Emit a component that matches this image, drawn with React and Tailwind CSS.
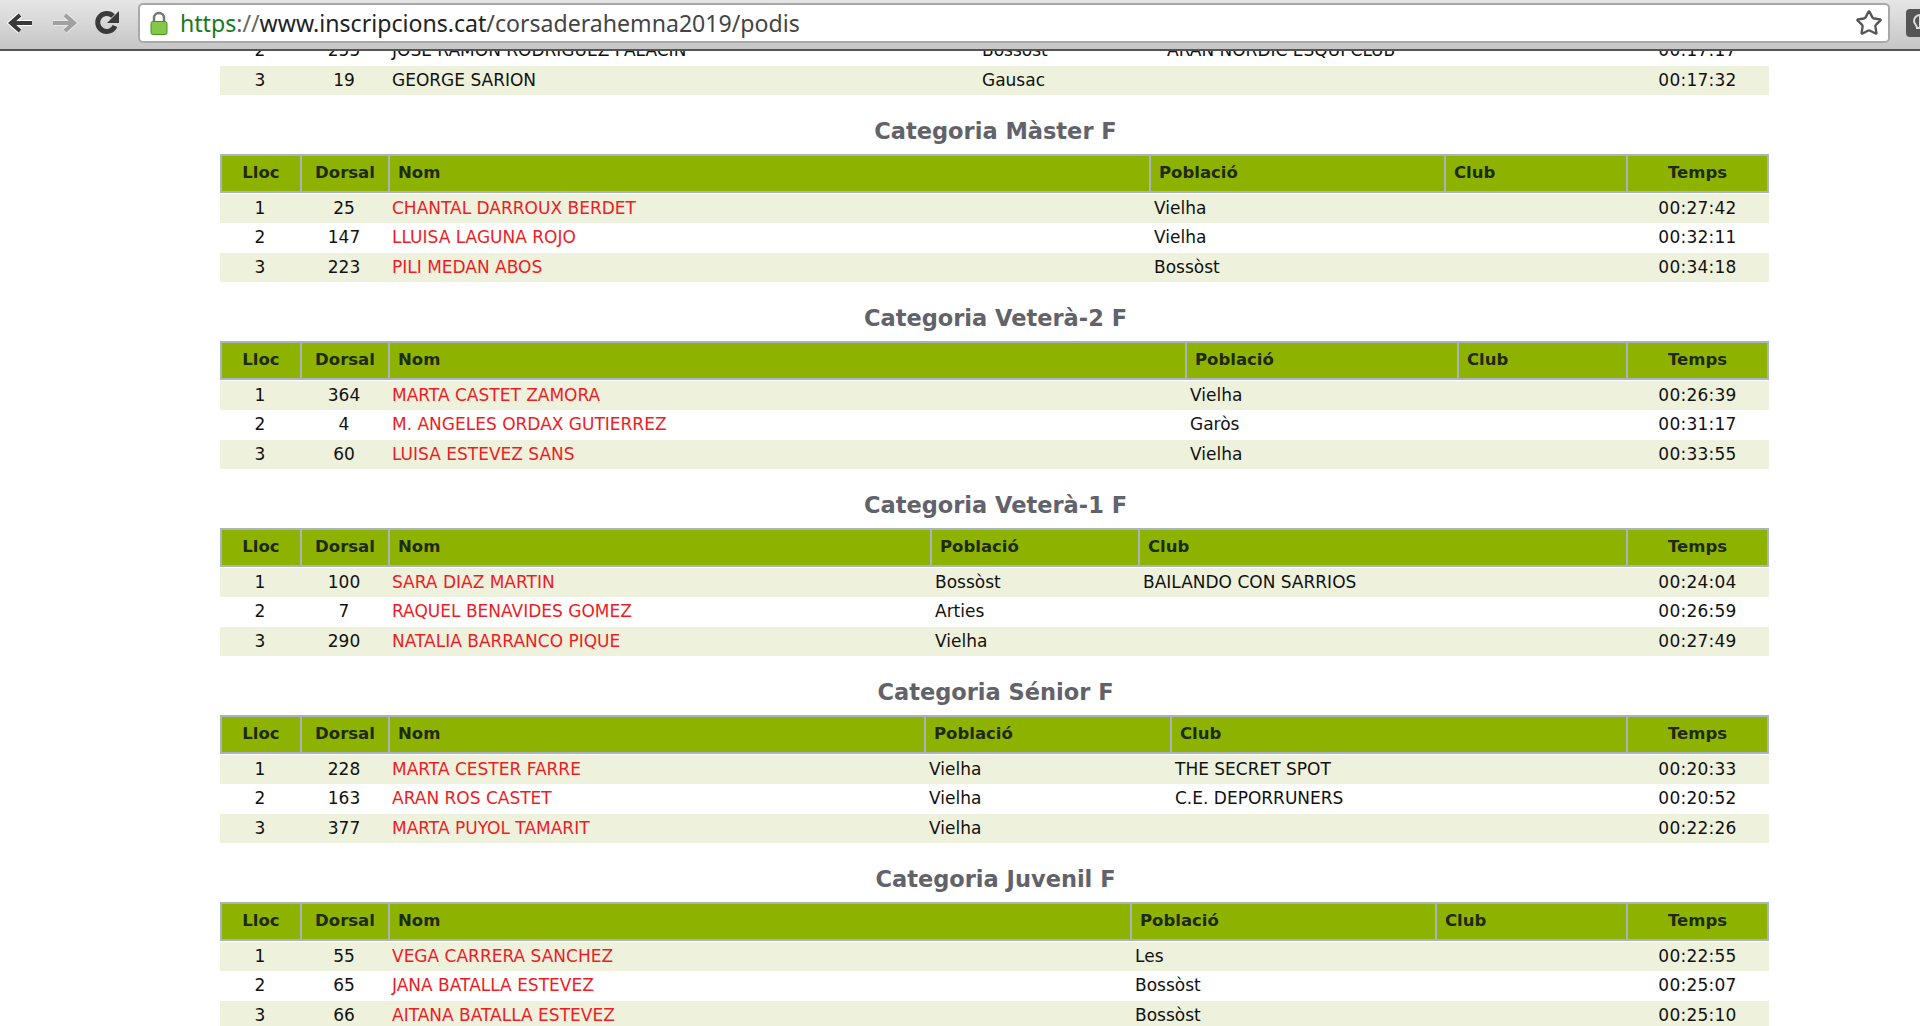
import { Star } from 'lucide-react'

const font = { fontFamily: '"DejaVu Sans", Verdana, sans-serif' }

const tables = [
  {
    title: 'Categoria Màster F',
    cols: ['w-[80px]', 'w-[88px]', 'w-[761px]', 'w-[295px]', 'w-[182px]', 'w-[143px]'],
    rows: [
      ['1', '25', 'CHANTAL DARROUX BERDET', 'Vielha', '', '00:27:42'],
      ['2', '147', 'LLUISA LAGUNA ROJO', 'Vielha', '', '00:32:11'],
      ['3', '223', 'PILI MEDAN ABOS', 'Bossòst', '', '00:34:18'],
    ],
  },
  {
    title: 'Categoria Veterà-2 F',
    cols: ['w-[80px]', 'w-[88px]', 'w-[797px]', 'w-[272px]', 'w-[169px]', 'w-[143px]'],
    rows: [
      ['1', '364', 'MARTA CASTET ZAMORA', 'Vielha', '', '00:26:39'],
      ['2', '4', 'M. ANGELES ORDAX GUTIERREZ', 'Garòs', '', '00:31:17'],
      ['3', '60', 'LUISA ESTEVEZ SANS', 'Vielha', '', '00:33:55'],
    ],
  },
  {
    title: 'Categoria Veterà-1 F',
    cols: ['w-[80px]', 'w-[88px]', 'w-[542px]', 'w-[208px]', 'w-[488px]', 'w-[143px]'],
    rows: [
      ['1', '100', 'SARA DIAZ MARTIN', 'Bossòst', 'BAILANDO CON SARRIOS', '00:24:04'],
      ['2', '7', 'RAQUEL BENAVIDES GOMEZ', 'Arties', '', '00:26:59'],
      ['3', '290', 'NATALIA BARRANCO PIQUE', 'Vielha', '', '00:27:49'],
    ],
  },
  {
    title: 'Categoria Sénior F',
    cols: ['w-[80px]', 'w-[88px]', 'w-[536px]', 'w-[246px]', 'w-[456px]', 'w-[143px]'],
    rows: [
      ['1', '228', 'MARTA CESTER FARRE', 'Vielha', 'THE SECRET SPOT', '00:20:33'],
      ['2', '163', 'ARAN ROS CASTET', 'Vielha', 'C.E. DEPORRUNERS', '00:20:52'],
      ['3', '377', 'MARTA PUYOL TAMARIT', 'Vielha', '', '00:22:26'],
    ],
  },
  {
    title: 'Categoria Juvenil F',
    cols: ['w-[80px]', 'w-[88px]', 'w-[742px]', 'w-[305px]', 'w-[191px]', 'w-[143px]'],
    rows: [
      ['1', '55', 'VEGA CARRERA SANCHEZ', 'Les', '', '00:22:55'],
      ['2', '65', 'JANA BATALLA ESTEVEZ', 'Bossòst', '', '00:25:07'],
      ['3', '66', 'AITANA BATALLA ESTEVEZ', 'Bossòst', '', '00:25:10'],
    ],
  },
]

const heads = ['Lloc', 'Dorsal', 'Nom', 'Població', 'Club', 'Temps']
const rowHeights = ['h-[29px]', 'h-[30px]', 'h-[29px]']

function PodiumTable({ cols, rows, red = true, showHead = true, start = 0 }) {
  return (
    <table className="w-[1549px] table-fixed border-separate border-spacing-0 text-[17px] text-[#111]">
      <colgroup>
        {cols.map((c, i) => (
          <col key={i} className={c} />
        ))}
      </colgroup>
      {showHead && (
        <thead>
          <tr className="bg-[#8db300] text-[16.5px] text-[#1f2a16]">
            {heads.map((h, i) => (
              <th
                key={h}
                className={`h-[39px] border-y-2 border-l-2 border-[#aab4c0] px-[8px] py-0 font-bold ${
                  i < 2 || i === 5 ? 'text-center' : 'text-left'
                } ${i === 5 ? 'border-r-2' : ''}`}
              >
                {h}
              </th>
            ))}
          </tr>
          <tr className="h-px">
            <td colSpan={6} className="p-0" />
          </tr>
        </thead>
      )}
      <tbody>
        {rows.map((r, i) => (
          <tr
            key={i}
            className={`${rowHeights[i + start]} ${(i + start) % 2 === 0 ? 'bg-[#eef1dc]' : 'bg-white'}`}
          >
            <td className="p-0 text-center">{r[0]}</td>
            <td className="p-0 text-center">{r[1]}</td>
            <td className={`px-[4px] py-0 ${red ? 'text-[#ee1c25]' : ''}`}>{r[2]}</td>
            <td className="px-[5px] py-0">{r[3]}</td>
            <td className="px-[5px] py-0">{r[4]}</td>
            <td className="p-0 text-center tracking-[0.25px]">{r[5]}</td>
          </tr>
        ))}
      </tbody>
    </table>
  )
}

function Toolbar() {
  return (
    <div className="relative z-10 flex h-[51px] items-start border-b-2 border-[#555] bg-gradient-to-b from-[#e6e6e6] to-[#c6c6c6] pt-[3px]">
      <div className="flex h-[40px] w-[138px] shrink-0 items-center pl-[7px]">
        <svg width="27" height="22" viewBox="0 0 27 22">
          <path d="M25 11H6M13 3l-9 8 9 8" fill="none" stroke="#fff" strokeWidth="6" />
          <path d="M25 11H6M13 3l-9 8 9 8" fill="none" stroke="#3a3a3a" strokeWidth="4" />
        </svg>
        <svg width="27" height="22" viewBox="0 0 27 22" className="ml-[17px]">
          <path d="M2 11h19M14 3l9 8-9 8" fill="none" stroke="#e8e8e8" strokeWidth="6" />
          <path d="M2 11h19M14 3l9 8-9 8" fill="none" stroke="#a0a0a0" strokeWidth="4" />
        </svg>
        <svg width="28" height="28" viewBox="0 0 28 28" className="ml-[15px]">
          <path d="M22 17a9 9 0 1 1-2-10" fill="none" stroke="#3a3a3a" strokeWidth="5" />
          <path d="M26 2v12H14z" fill="#3a3a3a" />
        </svg>
      </div>
      <div className="flex h-[40px] w-[1752px] items-center rounded-[5px] border-2 border-[#a9a9a9] bg-white pl-[10px] pr-[5px]">
        <svg width="18" height="24" viewBox="0 0 18 24" className="shrink-0">
          <path d="M4 11V7a5 5 0 0 1 10 0v4" fill="none" stroke="#777" strokeWidth="2.5" />
          <rect x="1" y="10.5" width="16" height="13" rx="2" fill="#84c84a" stroke="#4a8f22" />
        </svg>
        <span
          className="ml-[12px] text-[23.1px] text-[#222]"
          style={{ fontFamily: '"Noto Sans", sans-serif' }}
        >
          <span className="text-[#1a7a1a]">https</span>
          <span className="text-[#666]">://</span>www.inscripcions.cat
          <span className="text-[#444]">/corsaderahemna2019/podis</span>
        </span>
        <Star className="ml-auto h-[28px] w-[28px] fill-white text-[#555]" strokeWidth={2} />
      </div>
      <div className="ml-[16px] mt-[6px] h-[28px] w-[14px] overflow-hidden rounded-l-[4px] bg-[#555]">
        <svg width="14" height="28" viewBox="0 0 14 28">
          <path d="M14 6a6 6 0 0 0-6 6c0 3 3 4 3 7h3z" fill="none" stroke="#ddd" strokeWidth="2" />
        </svg>
      </div>
    </div>
  )
}

export default function App() {
  const firstCols = ['w-[80px]', 'w-[88px]', 'w-[589px]', 'w-[185px]', 'w-[464px]', 'w-[143px]']
  const firstRows = [
    ['2', '255', 'JOSE RAMON RODRIGUEZ PALACIN', 'Bossòst', 'ARAN NORDIC ESQUI CLUB', '00:17:17'],
    ['3', '19', 'GEORGE SARION', 'Gausac', '', '00:17:32'],
  ]

  return (
    <div className="flex h-[1026px] flex-col overflow-hidden bg-white" style={font}>
      <Toolbar />
      <div className="overflow-hidden">
        <div className="ml-[220px] mt-[-15px] flex w-[1549px] flex-col">
          <PodiumTable cols={firstCols} rows={firstRows} red={false} showHead={false} start={1} />
          {tables.map((t) => (
            <section key={t.title}>
              <h2 className="flex h-[59px] items-center justify-center pl-[2px] pt-[15px] text-[22.5px] font-bold text-[#62626a]">
                {t.title}
              </h2>
              <PodiumTable cols={t.cols} rows={t.rows} />
            </section>
          ))}
        </div>
      </div>
    </div>
  )
}
